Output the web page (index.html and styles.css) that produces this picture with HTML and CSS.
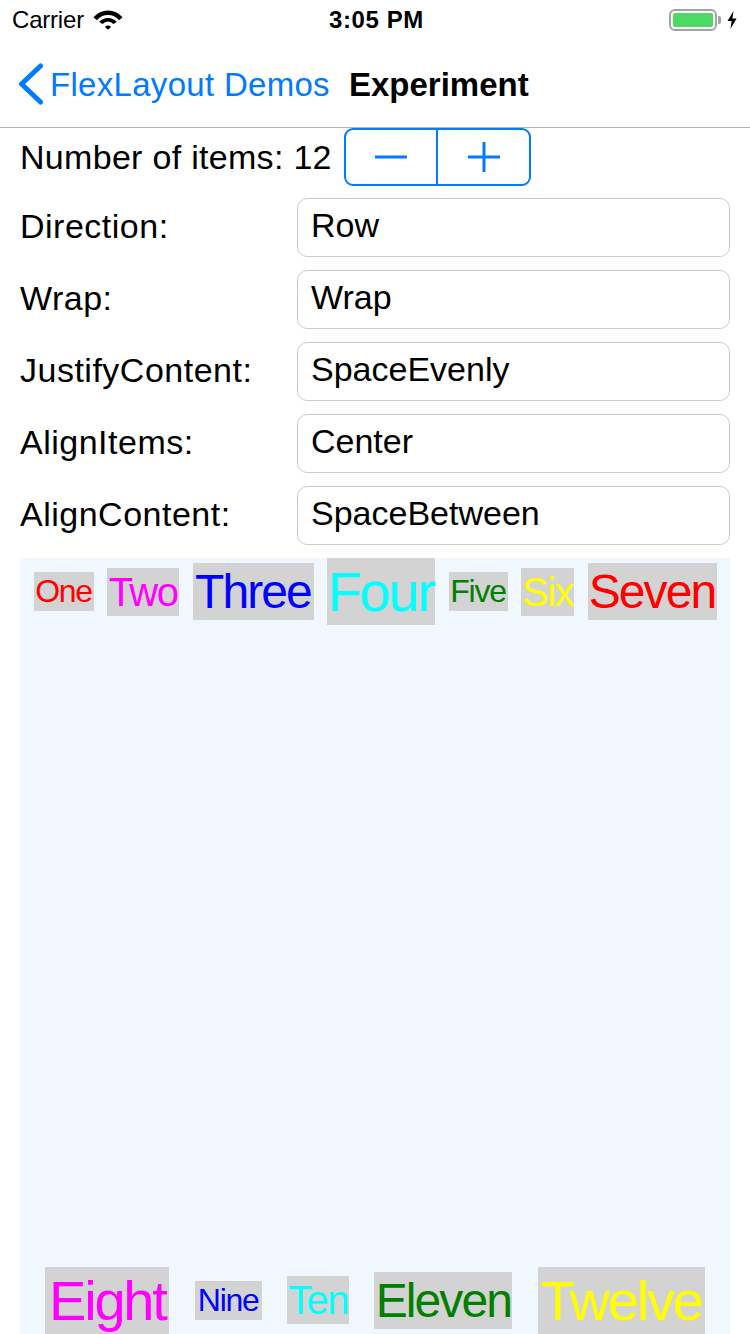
FILE: index.html
```html
<!DOCTYPE html>
<html lang="en">
<head>
<meta charset="utf-8">
<title>Experiment</title>
<link rel="stylesheet" href="styles.css">
</head>
<body>
<div class="status">
  <div class="status-left">
    <span class="carrier">Carrier</span>
    <svg class="wifi" width="32" height="20" viewBox="0 0 32 20">
      <path d="M1.45 7.28 A19 19 0 0 1 30.55 7.28 L27.11 10.18 A14.5 14.5 0 0 0 4.89 10.18 Z" fill="#000"/>
      <path d="M7.19 12.1 A11.5 11.5 0 0 1 24.81 12.1 L21.36 14.0 A7 7 0 0 0 10.64 14.0 Z" fill="#000"/>
      <path d="M12.94 16.93 A4 4 0 0 1 19.06 16.93 L16 19.8 Z" fill="#000"/>
    </svg>
  </div>
  <div class="time">3:05 PM</div>
  <div class="status-right">
    <div class="battery"><div class="battery-fill"></div></div>
    <div class="battery-nub"></div>
    <svg class="bolt" width="10" height="18" viewBox="0 0 10 18">
      <path d="M6.5 0 L0.5 10 H4.6 L3.4 18 L9.6 7.4 H5.4 Z" fill="#000"/>
    </svg>
  </div>
</div>

<header class="nav">
  <a class="back">
    <svg class="chevron" width="26" height="42" viewBox="0 0 26 42">
      <path d="M22.5 3 L3.5 21 L22.5 39" fill="none" stroke="#007aff" stroke-width="5" stroke-linecap="round" stroke-linejoin="round"/>
    </svg>
    <span class="back-text">FlexLayout Demos</span>
  </a>
  <h1 class="title">Experiment</h1>
</header>

<main class="content">
  <div class="count-row">
    <span class="count-label">Number of items: 12</span>
    <div class="stepper">
      <button class="step">
        <svg width="32" height="32" viewBox="0 0 32 32"><path d="M0 16 H32" stroke="#007aff" stroke-width="3"/></svg>
      </button>
      <button class="step step-plus">
        <svg width="32" height="32" viewBox="0 0 32 32"><path d="M0 16 H32 M16 1 V31" stroke="#007aff" stroke-width="3"/></svg>
      </button>
    </div>
  </div>

  <div class="form">
    <div class="form-row"><span class="label">Direction:</span><div class="field">Row</div></div>
    <div class="form-row"><span class="label">Wrap:</span><div class="field">Wrap</div></div>
    <div class="form-row"><span class="label">JustifyContent:</span><div class="field">SpaceEvenly</div></div>
    <div class="form-row"><span class="label">AlignItems:</span><div class="field">Center</div></div>
    <div class="form-row"><span class="label">AlignContent:</span><div class="field">SpaceBetween</div></div>
  </div>

  <div class="flex-demo">
    <div class="item s32 red it-one">One</div>
    <div class="item s40 magenta it-two">Two</div>
    <div class="item s48 blue it-three">Three</div>
    <div class="item s56 cyan it-four">Four</div>
    <div class="item s32 green it-five">Five</div>
    <div class="item s40 yellow it-six">Six</div>
    <div class="item s48 red it-seven">Seven</div>
    <div class="item s56 magenta it-eight">Eight</div>
    <div class="item s32 blue it-nine">Nine</div>
    <div class="item s40 cyan it-ten">Ten</div>
    <div class="item s48 green it-eleven">Eleven</div>
    <div class="item s56 yellow it-twelve">Twelve</div>
  </div>
</main>
</body>
</html>
```

FILE: styles.css
```css
* { box-sizing: border-box; }

html, body {
  margin: 0;
  padding: 0;
  background: #fff;
}

body {
  width: 750px;
  height: 1334px;
  overflow: hidden;
  font-family: "Liberation Sans", Arial, sans-serif;
  color: #000;
}

/* Status bar */
.status {
  height: 40px;
  display: grid;
  grid-template-columns: 1fr auto 1fr;
  align-items: center;
  padding: 0 13px 0 12px;
}
.status-left {
  display: flex;
  align-items: center;
  gap: 8px;
}
.carrier {
  font-size: 24px;
  line-height: 40px;
  letter-spacing: -0.2px;
}
.wifi { display: block; margin-top: -1px; }
.time {
  font-size: 24px;
  font-weight: 700;
  line-height: 40px;
  letter-spacing: 0.6px;
  padding-left: 4px;
}
.status-right {
  display: flex;
  align-items: center;
  justify-content: flex-end;
}
.battery {
  width: 48px;
  height: 22px;
  border: 2px solid #a3a3a3;
  border-radius: 6px;
  padding: 2px;
}
.battery-fill {
  width: 100%;
  height: 100%;
  background: #4cd964;
  border-radius: 2px;
}
.battery-nub {
  width: 3px;
  height: 8px;
  background: #a3a3a3;
  border-radius: 0 2px 2px 0;
  margin-left: 1px;
}
.bolt { display: block; margin-left: 6px; }

/* Navigation bar */
.nav {
  height: 88px;
  border-bottom: 1px solid #b2b2b2;
  display: flex;
  align-items: center;
  padding-left: 18px;
  padding-top: 3px;
}
.back {
  display: flex;
  align-items: center;
  gap: 6px;
  color: #007aff;
  text-decoration: none;
}
.chevron { display: block; margin-top: -2px; }
.back-text {
  font-size: 33px;
  line-height: 40px;
  letter-spacing: 0.3px;
}
.title {
  margin: 0 0 0 19px;
  font-size: 33px;
  font-weight: 700;
  line-height: 40px;
}

/* Content */
.content {
  padding: 0 20px;
}
.count-row {
  display: flex;
  align-items: center;
  gap: 12px;
  height: 58px;
}
.count-label {
  font-size: 34px;
  letter-spacing: 0.3px;
}
.stepper {
  display: flex;
  width: 187px;
  height: 58px;
  border: 2px solid #007aff;
  border-radius: 9px;
  overflow: hidden;
}
.step {
  flex: 1;
  display: flex;
  align-items: center;
  justify-content: center;
  background: transparent;
  border: 0;
  padding: 0;
  margin: 0;
}
.step svg { display: block; }
.step-plus {
  border-left: 2px solid #007aff;
}

.form {
  margin-top: 12px;
  display: flex;
  flex-direction: column;
  gap: 13px;
}
.form-row {
  display: grid;
  grid-template-columns: 277px 1fr;
  align-items: center;
  height: 59px;
}
.label {
  font-size: 34px;
  letter-spacing: 0.5px;
  padding-bottom: 2px;
}
.field {
  height: 59px;
  border: 1px solid #cdcdcd;
  border-radius: 10px;
  display: flex;
  align-items: center;
  padding: 0 0 5px 13px;
  font-size: 34px;
}

/* Flex demo area */
.flex-demo {
  margin-top: 13px;
  height: 776px;
  background: #f0f7fe;
  display: flex;
  flex-wrap: wrap;
  justify-content: space-evenly;
  align-items: center;
  align-content: space-between;
}
.item {
  background: #d3d3d3;
  line-height: 1.2;
  text-align: center;
  white-space: nowrap;
  letter-spacing: -0.04em;
  display: flex;
  justify-content: center;
}
.s32 { font-size: 32px; }
.s40 { font-size: 40px; }
.s48 { font-size: 48px; }
.s56 { font-size: 56px; }

.red { color: #ff0000; }
.magenta { color: #ff00ff; }
.blue { color: #0000ff; }
.cyan { color: #00ffff; }
.green { color: #008000; }
.yellow { color: #ffff00; }

.it-one { width: 60px; }
.it-two { width: 72px; }
.it-three { width: 121px; }
.it-four { width: 108px; }
.it-five { width: 59px; }
.it-six { width: 53px; }
.it-seven { width: 129px; }
.it-eight { width: 124px; }
.it-nine { width: 67px; }
.it-ten { width: 62px; }
.it-eleven { width: 138px; }
.it-twelve { width: 167px; }
```
